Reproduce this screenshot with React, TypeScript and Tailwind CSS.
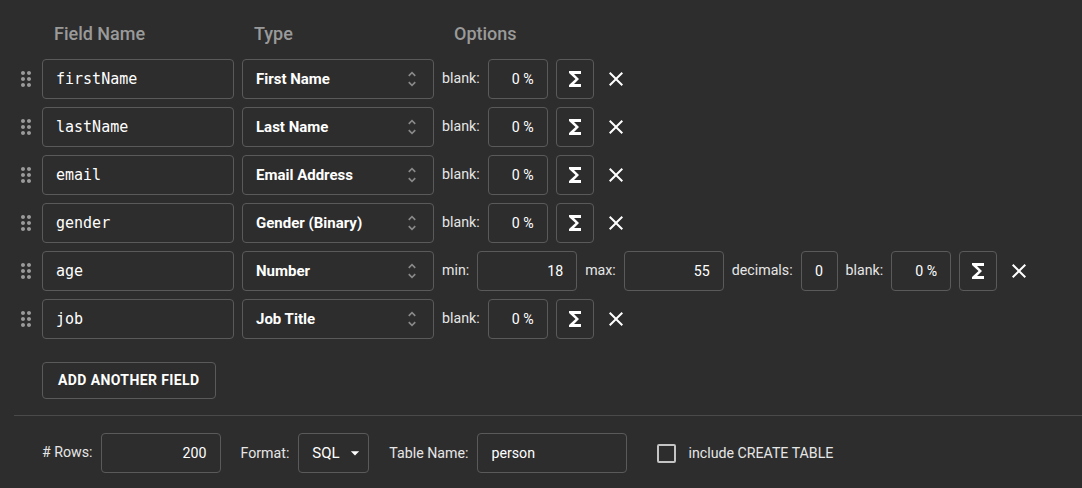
import { useState } from 'react';

type Field = {
  name: string;
  type: string;
  kind?: 'number';
};

const fields: Field[] = [
  { name: 'firstName', type: 'First Name' },
  { name: 'lastName', type: 'Last Name' },
  { name: 'email', type: 'Email Address' },
  { name: 'gender', type: 'Gender (Binary)' },
  { name: 'age', type: 'Number', kind: 'number' },
  { name: 'job', type: 'Job Title' },
];

const DragIcon = () => (
  <svg width="24" height="24" viewBox="0 0 24 24" fill="#9a9a9a">
    <path d="M11 18c0 1.1-.9 2-2 2s-2-.9-2-2 .9-2 2-2 2 .9 2 2zm-2-8c-1.1 0-2 .9-2 2s.9 2 2 2 2-.9 2-2-.9-2-2-2zm0-6c-1.1 0-2 .9-2 2s.9 2 2 2 2-.9 2-2-.9-2-2-2zm6 4c1.1 0 2-.9 2-2s-.9-2-2-2-2 .9-2 2 .9 2 2 2zm0 2c-1.1 0-2 .9-2 2s.9 2 2 2 2-.9 2-2-.9-2-2-2zm0 6c-1.1 0-2 .9-2 2s.9 2 2 2 2-.9 2-2-.9-2-2-2z" />
  </svg>
);

const UnfoldIcon = () => (
  <svg width="20" height="20" viewBox="0 0 24 24" fill="#8a8a8a">
    <path d="M12 5.83 15.17 9l1.41-1.41L12 3 7.41 7.59 8.83 9zm0 12.34L8.83 15l-1.41 1.41L12 21l4.59-4.59L15.17 15z" />
  </svg>
);

const SigmaIcon = () => (
  <svg width="24" height="24" viewBox="0 0 24 24" fill="#ffffff">
    <path d="M18 4H6v2l6.5 6L6 18v2h12v-3h-7l5-5-5-5h7z" />
  </svg>
);

const CloseIcon = () => (
  <svg width="24" height="24" viewBox="0 0 24 24" fill="#ffffff">
    <path d="M19 6.41 17.59 5 12 10.59 6.41 5 5 6.41 10.59 12 5 17.59 6.41 19 12 13.41 17.59 19 19 17.59 13.41 12z" />
  </svg>
);

const ArrowDropDown = () => (
  <svg width="20" height="20" viewBox="0 0 24 24" fill="#ffffff">
    <path d="M7 10l5 5 5-5z" />
  </svg>
);

const box = 'h-10 border border-[#5a5a5a] rounded-[4px] bg-transparent text-white outline-none';

const Label = ({ children }: { children: string }) => (
  <span className="text-[14.2px] text-[#e6e6e6] whitespace-nowrap">{children}</span>
);

const NumBox = ({ value, width }: { value: string; width: string }) => (
  <input
    readOnly
    value={value}
    className={`${box} ${width} text-right pr-[13px] text-[14.2px]`}
  />
);

const FieldRow = ({ field }: { field: Field }) => {
  const [name, setName] = useState(field.name);
  return (
    <div className="flex items-center h-10">
      <div className="w-6 flex justify-center">
        <DragIcon />
      </div>
      <input
        value={name}
        onChange={(e) => setName(e.target.value)}
        className={`${box} ml-1 w-[192px] pl-[13px] text-[15px] font-['DejaVu_Sans_Mono',monospace]`}
      />
      <div className={`${box} ml-2 w-[192px] flex items-center justify-between pl-[13px] pr-[11px]`}>
        <span className="text-[15px] font-bold">{field.type}</span>
        <UnfoldIcon />
      </div>
      <div className="flex items-center gap-2 ml-2">
        {field.kind === 'number' ? (
          <>
            <Label>min:</Label>
            <NumBox value="18" width="w-[100px]" />
            <Label>max:</Label>
            <NumBox value="55" width="w-[100px]" />
            <Label>decimals:</Label>
            <input
              readOnly
              value="0"
              className={`${box} w-[37px] text-center text-[14.2px]`}
            />
          </>
        ) : null}
        <Label>blank:</Label>
        <NumBox value="0 %" width="w-[60px]" />
        <button className={`${box} w-[38px] flex items-center justify-center`}>
          <SigmaIcon />
        </button>
        <button className="w-7 h-7 flex items-center justify-center">
          <CloseIcon />
        </button>
      </div>
    </div>
  );
};

const App = () => {
  const [createTable, setCreateTable] = useState(false);

  return (
    <div className="w-[1082px] h-[488px] bg-[#2d2d2d] overflow-hidden font-['Roboto',sans-serif]">
      <div className="flex pl-[54px] pt-[22px] text-[18px] font-medium text-[#9a9a9a] leading-6">
        <div className="w-[200px]">Field Name</div>
        <div className="w-[200px]">Type</div>
        <div>Options</div>
      </div>

      <div className="flex flex-col gap-2 pl-[14px] mt-[13px]">
        {fields.map((f) => (
          <FieldRow key={f.name} field={f} />
        ))}
      </div>

      <div className="pl-[42px] mt-[23px]">
        <button className="h-[37px] px-[15px] border border-[#5a5a5a] rounded-[4px] text-[14px] font-bold tracking-[0.4px] text-white uppercase">
          Add another field
        </button>
      </div>

      <div className="ml-[14px] mt-4 border-t border-[#4a4a4a]" />

      <div className="flex items-center pl-[42px] mt-[17px]">
        <Label># Rows:</Label>
        <NumBox value="200" width="w-[120px] ml-2" />
        <span className="ml-5">
          <Label>Format:</Label>
        </span>
        <div className={`${box} ml-[9px] w-[71px] flex items-center pl-[13px] gap-[5px]`}>
          <span className="text-[15px]">SQL</span>
          <ArrowDropDown />
        </div>
        <span className="ml-5">
          <Label>Table Name:</Label>
        </span>
        <input
          readOnly
          value="person"
          className={`${box} ml-[9px] w-[150px] pl-[13px] text-[14.2px]`}
        />
        <button
          onClick={() => setCreateTable(!createTable)}
          className="ml-[30px] w-[19px] h-[19px] border-2 border-[#c4c4c4] rounded-[2px]"
        />
        <span className="ml-3">
          <Label>include CREATE TABLE</Label>
        </span>
      </div>
    </div>
  );
};

export default App;
